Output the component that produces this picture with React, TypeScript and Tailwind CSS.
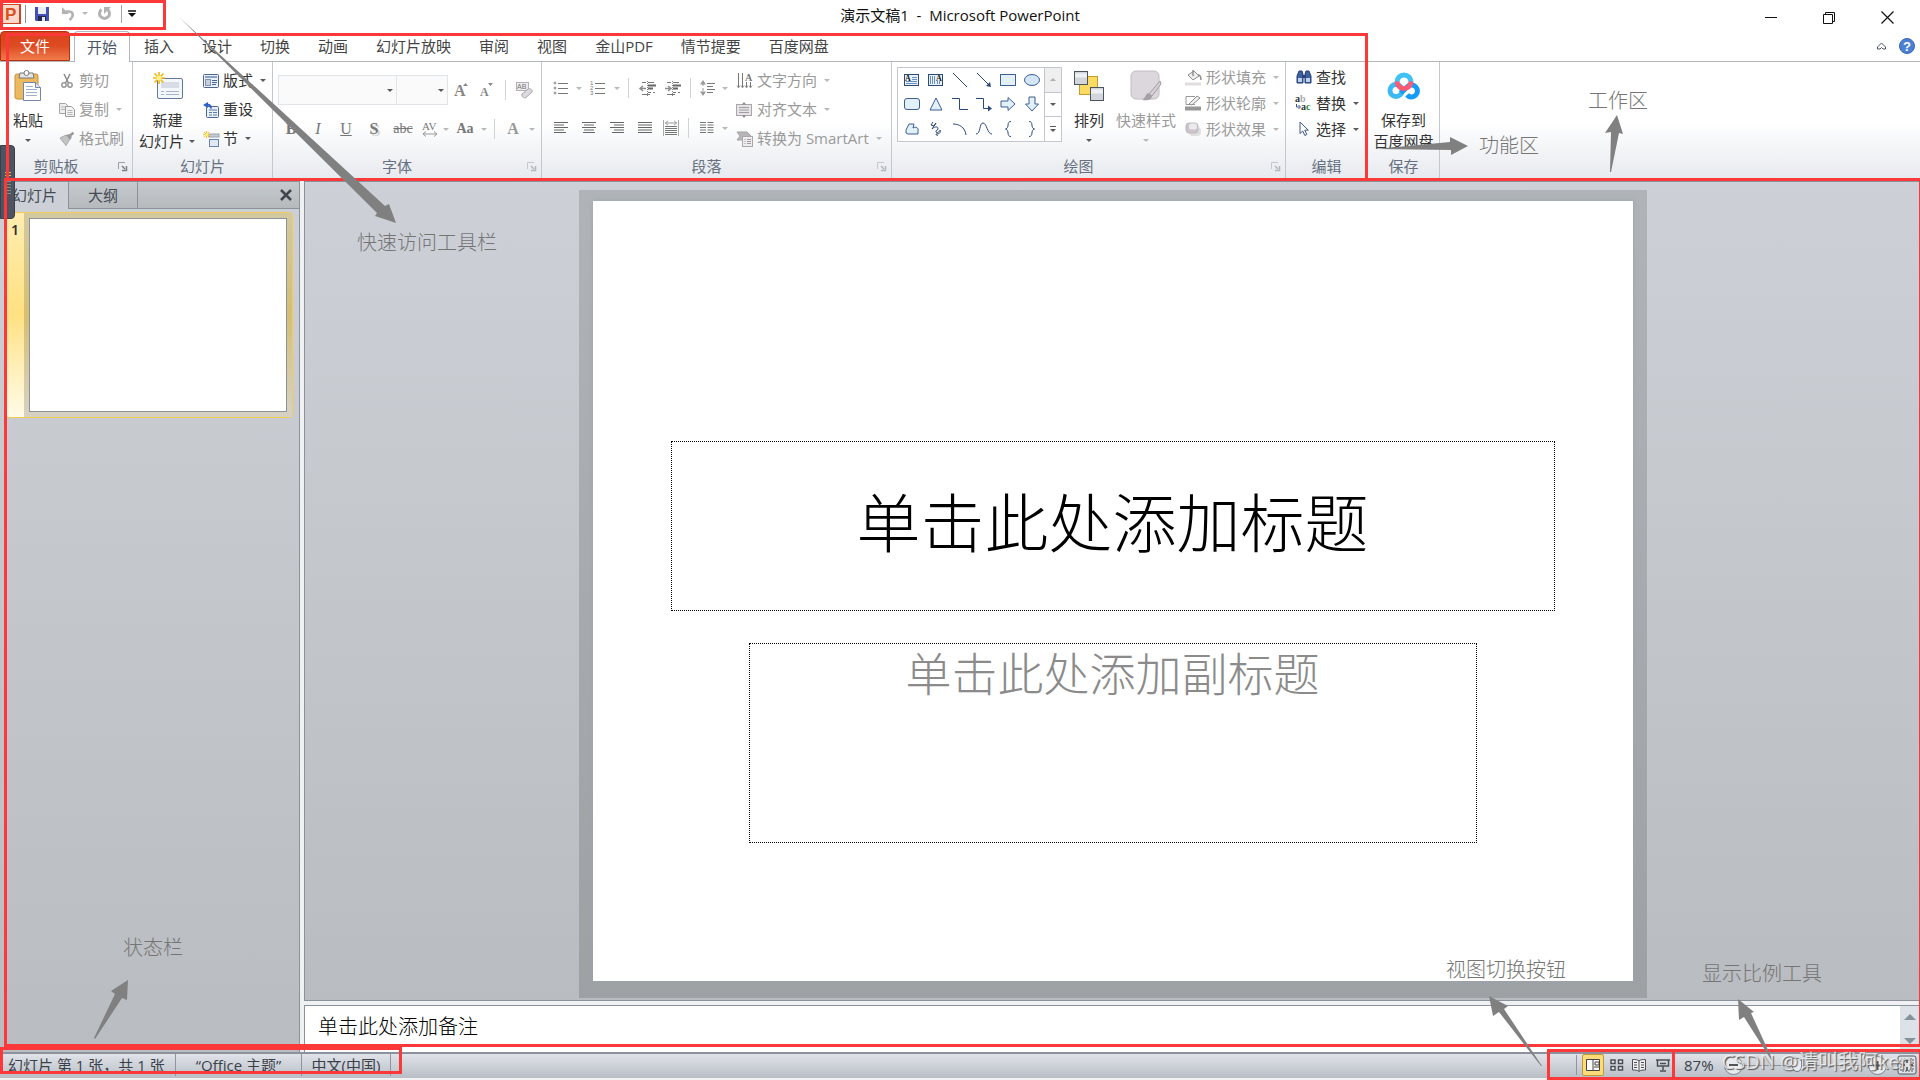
import type { ReactNode } from "react";
import clsx from "clsx";

const tabs = ["开始", "插入", "设计", "切换", "动画", "幻灯片放映", "审阅", "视图", "金山PDF", "情节提要", "百度网盘"];

/* ---------- small shared parts ---------- */

function Svg({ w, h, children, className }: { w: number; h: number; children: ReactNode; className?: string }) {
  return (
    <svg width={w} height={h} viewBox={`0 0 ${w} ${h}`} fill="none" className={clsx("shrink-0 overflow-visible", className)} aria-hidden="true">
      {children}
    </svg>
  );
}

function Caret({ dim, className }: { dim?: boolean; className?: string }) {
  return (
    <span className={clsx("flex w-2 shrink-0 justify-center", className)}>
      <Svg w={6} h={3}>
        <path d="M0 0h6L3 3z" fill={dim ? "#b9b9b9" : "#5a5a5a"} />
      </Svg>
    </span>
  );
}

function Sep({ className }: { className: string }) {
  return (
    <span className={clsx("flex shrink-0 justify-center", className)}>
      <span className="h-5 w-px bg-[#cfd3da]" />
    </span>
  );
}

function Launcher({ dim }: { dim?: boolean }) {
  return (
    <button aria-label="对话框启动器" className="flex w-5 shrink-0 items-center justify-end pr-[5px]">
      <Svg w={9} h={9}>
        <path d="M.5 7V.5H7" stroke={dim ? "#c4c8cd" : "#9b9fa5"} />
        <path d="M4 4l3 3M8.500 4v4.500H4" stroke={dim ? "#b4b8bd" : "#7d8187"} strokeWidth="1.500" />
      </Svg>
    </button>
  );
}

function Group({ label, className, launcher, dimLauncher, children }: { label: string; className: string; launcher?: boolean; dimLauncher?: boolean; children: ReactNode }) {
  return (
    <section className={clsx("flex shrink-0 flex-col border-r border-[#c3c7ce]", className)}>
      <div className="flex h-[92px]">{children}</div>
      <div className="flex h-6 items-center">
        <span className="flex-1 text-center text-[15px] leading-6 text-[#667080]">{label}</span>
        {launcher && <Launcher dim={dimLauncher} />}
      </div>
    </section>
  );
}

function Row({ icon, text, dim, caret, compact }: { icon: ReactNode; text: string; dim?: boolean; caret?: boolean; compact?: boolean }) {
  return (
    <button className={clsx("flex items-center gap-1 whitespace-nowrap text-[15px]", compact ? "h-[26px]" : "h-[29px]", dim ? "text-[#9a9a9a]" : "text-[#333]")}>
      <span className="flex w-[17px] justify-center">{icon}</span>
      <span>{text}</span>
      {caret && <Caret dim={dim} className="ml-0.5" />}
    </button>
  );
}

function Big({ icon, lines, dim, caret, className }: { icon: ReactNode; lines: string[]; dim?: boolean; caret?: "below" | "inline"; className: string }) {
  return (
    <button className={clsx("flex shrink-0 flex-col items-center pt-1.5 text-[15px] leading-[21px]", dim ? "text-[#9a9a9a]" : "text-[#333]", className)}>
      <span className="flex h-9 items-center">{icon}</span>
      <span className="mt-1.5">{lines[0]}</span>
      {lines[1] && (
        <span className="flex items-center gap-1 whitespace-nowrap">
          {lines[1]}
          {caret === "inline" && <Caret />}
        </span>
      )}
      {caret === "below" && <Caret dim={dim} className="mt-2" />}
    </button>
  );
}

/* ---------- ribbon icons ---------- */

const lines = (list: [number, number][], color = "#666") => list.map(([x, w], i) => <path key={i} d={`M${x} ${i * 2.5 + 0.5}h${w}`} stroke={color} />);

const AlignIcon = ({ kind }: { kind: "l" | "c" | "r" | "j" }) => (
  <Svg w={14} h={12}>
    {lines(
      {
        l: [[0, 14], [0, 10], [0, 14], [0, 10], [0, 12]],
        c: [[0, 14], [2, 10], [0, 14], [2, 10], [1, 12]],
        r: [[0, 14], [4, 10], [0, 14], [4, 10], [2, 12]],
        j: [[0, 14], [0, 14], [0, 14], [0, 14], [0, 14]],
      }[kind] as [number, number][]
    )}
  </Svg>
);

const PasteIcon = () => (
  <Svg w={28} h={32}>
    <rect x="1" y="4" width="23" height="25" rx="2" fill="#edb95e" stroke="#c98f3a" />
    <path d="M6 3h13l1 5H5z" fill="#e3e5e8" stroke="#777" />
    <circle cx="12.500" cy="3" r="2.500" fill="#fff" stroke="#777" />
    <path d="M9.500 12.500h12l5 5v13h-17z" fill="#fff" stroke="#6f86ad" />
    <path d="M21.500 12.500v5h5" fill="#dce6f4" stroke="#6f86ad" />
    <path d="M12 16.500h7M12 19.500h11M12 22.500h11M12 25.500h11" stroke="#9db0cf" />
  </Svg>
);

const CutIcon = () => (
  <Svg w={12} h={16}>
    <path d="M3 1l4.500 9M9 1L4.500 10" stroke="#8b8b8b" strokeWidth="1.500" />
    <circle cx="3" cy="12" r="2.200" stroke="#999" strokeWidth="1.500" />
    <circle cx="9" cy="12" r="2.200" stroke="#999" strokeWidth="1.500" />
  </Svg>
);

const CopyIcon = () => (
  <Svg w={16} h={14}>
    <path d="M.5.5h6l3 3v7h-9z" fill="#eee" stroke="#a5a5a5" />
    <path d="M6.500 3.500h6l3 3v7h-9z" fill="#f3f3f3" stroke="#9c9c9c" />
    <path d="M2 4h4M2 6.500h4M8.500 7.500h5M8.500 9.500h5M8.500 11.500h5" stroke="#b5b5b5" />
  </Svg>
);

const BrushIcon = () => (
  <Svg w={16} h={14}>
    <path d="M1 6l6-3 4 4-4 6.500z" fill="#c4c4c4" stroke="#aaa" />
    <path d="M7 3l3-1 3 3-2 3z" fill="#9c9c9c" />
    <path d="M11 3.500L14.500.8" stroke="#999" strokeWidth="2.500" />
  </Svg>
);

const Sun = () => (
  <>
    <path d="M6 0v12M0 6h12M1.500 1.500l9 9M10.500 1.500l-9 9" stroke="#f2b70c" strokeWidth="1.600" />
    <circle cx="6" cy="6" r="2.500" fill="#fff38a" />
  </>
);

const NewSlideIcon = () => (
  <Svg w={30} h={28}>
    <rect x="4.500" y="6.500" width="25" height="20" rx="1.500" fill="#f4f7fb" stroke="#6479a0" />
    <rect x="8" y="10" width="18" height="6" fill="#d7dce6" />
    <path d="M8 19.500h3M13 19.500h13M8 22.500h3M13 22.500h13" stroke="#a9b4c8" />
    <Sun />
  </Svg>
);

const LayoutIcon = () => (
  <Svg w={16} h={14}>
    <rect x=".5" y=".5" width="15" height="13" rx="1" fill="#eaf0f8" stroke="#4c668f" />
    <path d="M2 3h12" stroke="#6b87b3" strokeWidth="1.500" />
    <rect x="2.500" y="5.500" width="5" height="6" fill="#c5cfdd" stroke="#8594ab" />
    <path d="M9 6.500h5M9 8.500h5M9 10.500h4" stroke="#47638f" />
  </Svg>
);

const ResetIcon = () => (
  <Svg w={16} h={16}>
    <rect x="3.500" y="4.500" width="12" height="11" rx="1" fill="#eaf0f8" stroke="#4c668f" />
    <path d="M6 8h8M6 10.500h3M10 10.500h4M6 13h3M10 13h4" stroke="#5d78a5" />
    <path d="M8 6.500C8 3 6 2.500 4 3" stroke="#2c62c4" strokeWidth="2" />
    <path d="M5 0v6L0 3z" fill="#2c62c4" />
  </Svg>
);

const SectionIcon = () => (
  <Svg w={16} h={16}>
    <rect x="6" y="3" width="10" height="3" fill="#c6ccd6" stroke="#99a3b3" />
    <rect x="6.500" y="8.500" width="9" height="7" fill="#dfe8f4" stroke="#6a84b0" />
    <g transform="scale(.6)">
      <Sun />
    </g>
  </Svg>
);

const EraserIcon = () => (
  <Svg w={17} h={17}>
    <rect x=".5" y=".5" width="12" height="8" fill="#eceaed" stroke="#b3b0b6" />
    <text x="1" y="7" fontSize="7" fill="#777" fontFamily="Liberation Sans">AB</text>
    <path d="M6 12l6-5c2-1 5 1 4 3l-6 5.500c-2 1-5-1-4-3.500z" fill="#dddadf" stroke="#a7a3ab" />
  </Svg>
);

const ListIcon = ({ numbered }: { numbered?: boolean }) => (
  <Svg w={16} h={14}>
    {numbered ? (
      <g fontSize="6" fill="#777" fontFamily="Liberation Sans">
        <text x="0" y="4">1</text>
        <text x="0" y="9">2</text>
        <text x="0" y="14">3</text>
      </g>
    ) : (
      <g stroke="#888">
        <circle cx="2" cy="2" r="1" />
        <circle cx="2" cy="7" r="1" />
        <circle cx="2" cy="12" r="1" />
      </g>
    )}
    <path d="M5 2.500h10M5 7.500h10M5 12.500h10" stroke="#777" />
  </Svg>
);

const IndentIcon = ({ inc }: { inc?: boolean }) => (
  <Svg w={16} h={15}>
    <path d="M2 1.500h4M2 13.500h8M8 1.500h6M8 4.500h8M8 11.500h3M13 11.500h2" stroke="#777" />
    <path d="M8 4.500h8M8 7.500h5" stroke="#666" strokeWidth="2" />
    <path d="M7.500 0v15" stroke="#888" strokeDasharray="1 1" />
    <path d={inc ? "M0 7.500h5M3 5l3 2.500L3 10" : "M6 7.500H1M3 5L0 7.500 3 10"} stroke="#8d8d8d" strokeWidth="1.500" />
  </Svg>
);

const SpacingIcon = () => (
  <Svg w={16} h={16}>
    <path d="M3 3v10" stroke="#999" strokeDasharray="3 2" />
    <path d="M0 4.500L3 0l3 4.500zM0 11.500L3 16l3-4.500z" fill="#999" />
    <path d="M7 3.500h8M7 6.500h6M7 9.500h8M7 12.500h6" stroke="#777" />
  </Svg>
);

const DistributeIcon = () => (
  <Svg w={16} h={16}>
    <path d="M.5 0v16M15.500 0v16" stroke="#aaa" />
    <path d="M2 3h12M5 .8L2.500 3 5 5.200M11 .8L13.500 3 11 5.200" stroke="#999" />
    <path d="M2 6.500h12M2 8.500h12M2 10.500h12M2 12.500h12M2 14.500h12" stroke="#777" />
  </Svg>
);

const ColumnsIcon = () => (
  <Svg w={14} h={12}>
    <path d="M0 .5h6M0 3h6M0 5.500h6M0 8h6M0 10.500h6M7.500.5h6M7.500 3h6M7.500 5.500h6M7.500 8h6M7.500 10.500h6" stroke="#777" />
  </Svg>
);

const DirectionIcon = () => (
  <Svg w={16} h={16}>
    <path d="M1.500 0v14M5.500 0v14M9.500 9v5M13.500 9v5" stroke="#777" />
    <path d="M0 12.500l1.500 2.500L3 12.500M4 12.500l1.500 2.500L7 12.500M8 12.500l1.500 2.500 1.500-2.500M12 12.500l1.500 2.500 1.500-2.500" stroke="#777" strokeWidth=".7" />
    <text x="8" y="8" fontSize="10" fontWeight="bold" fill="#777" fontFamily="Liberation Serif">A</text>
  </Svg>
);

const AlignTextIcon = () => (
  <Svg w={17} h={16}>
    <rect x=".5" y="2.500" width="15" height="11" fill="#e7e4e7" stroke="#aaa6aa" />
    <path d="M3 5.500h10M3 8h10M3 10.500h10" stroke="#9f9b9f" />
    <path d="M6 2.500L8 0l2 2.500zM6 13.500L8 16l2-2.500z" fill="#888" />
  </Svg>
);

const SmartArtIcon = () => (
  <Svg w={16} h={16}>
    <path d="M0 1h10l4 4-4 4H0l3-4z" fill="#b9b6b9" stroke="#a5a2a5" />
    <rect x="5.500" y="5.500" width="10" height="10" fill="#efedef" stroke="#aaa6aa" />
    <path d="M7.500 8.500h1M10 8.500h4M7.500 10.500h1M10 10.500h4M7.500 12.500h1M10 12.500h4" stroke="#9f9b9f" />
  </Svg>
);

const ArrangeIcon = () => (
  <Svg w={31} h={31}>
    <rect x="5.500" y="5.500" width="18" height="18" fill="#fbdb62" stroke="#c79c2d" />
    <rect x=".5" y=".5" width="13" height="13" fill="#d3d7dc" stroke="#4d545d" />
    <rect x="16.500" y="16.500" width="13" height="13" fill="#d3d7dc" stroke="#4d545d" />
    <path d="M1 4.500h12M17 20.500h12" stroke="#eef0f2" strokeWidth="4" />
  </Svg>
);

const QuickStyleIcon = () => (
  <Svg w={32} h={32}>
    <rect x="1" y="1" width="28" height="28" rx="5" fill="#dcd7dc" stroke="#c1bcc1" />
    <path d="M30 11L19 24l3 2 9-12z" fill="#d5d1d5" stroke="#a09ca0" />
    <path d="M18 23l4 3c0 4-5 5-10 4 3-1 3-5 6-7z" fill="#a5a1a5" />
  </Svg>
);

const FillIcon = () => (
  <Svg w={17} h={17}>
    <path d="M3 6l6-4 5 5-6 4z" fill="#eee" stroke="#8f8f8f" />
    <path d="M8 7V1M13 6c2 0 3 2 3 5" stroke="#8f8f8f" strokeWidth="1.500" />
    <path d="M0 15h16" stroke="#e2dde0" strokeWidth="3" />
  </Svg>
);

const OutlineIcon = () => (
  <Svg w={17} h={16}>
    <path d="M10 1.500H1v8h9" stroke="#999" />
    <path d="M4 9l8-8 3 2-8 7z" fill="#eee" stroke="#8f8f8f" />
    <path d="M0 13.500h16" stroke="#979797" strokeWidth="4" />
  </Svg>
);

const EffectIcon = () => (
  <Svg w={17} h={15}>
    <rect x="4" y="5" width="12" height="9" rx="4" fill="#e0dfe0" />
    <rect x="1" y="1" width="12" height="10" rx="3" fill="#cbc5cb" stroke="#bdb8bd" />
    <rect x="4" y="1.500" width="8" height="6" rx="2" fill="#ece9ec" />
  </Svg>
);

const FindIcon = () => (
  <Svg w={16} h={14}>
    <path d="M3 1h3l1 3v9H1V6zM10 1h3l2 5v7H9V4z" fill="#3d5f9d" stroke="#274377" />
    <path d="M6 5h4v3H6z" fill="#274377" />
    <path d="M2 8h4v4H2zM10 8h4v4h-4z" fill="#bfd0ee" />
  </Svg>
);

const ReplaceIcon = () => (
  <Svg w={17} h={16}>
    <g fontFamily="Liberation Serif" fontWeight="bold" fontSize="10">
      <text x="0" y="7" fill="#333">a</text>
      <text x="5" y="7" fill="#aaa">b</text>
      <text x="6" y="15" fill="#333">a</text>
      <text x="11" y="15" fill="#1e8a33">c</text>
    </g>
    <path d="M1.500 9v3h3M3.500 10l2 2-2 2" stroke="#33518a" />
  </Svg>
);

const SelectIcon = () => (
  <Svg w={10} h={16}>
    <path d="M1 1v11.500l2.800-2.500 2 4.500 2-1-2-4.300h3.500z" fill="#fff" stroke="#3d5889" />
  </Svg>
);

const BaiduIcon = () => (
  <Svg w={34} h={28}>
    <g strokeWidth="5">
      <circle cx="9" cy="18.500" r="6" stroke="#3ab9f3" />
      <path d="M10 10a7 7 0 0 1 14 0" stroke="#3fc2f5" />
      <path d="M14 21l6-6a6 6 0 1 1 0 8" stroke="#169cf6" />
      <path d="M10 9.500a7 7 0 0 0 14 0" stroke="#fb5a77" />
    </g>
  </Svg>
);

/* ---------- shape gallery ---------- */

const shapes: { name: string; art: ReactNode }[] = [
  { name: "文本框", art: <><rect x=".5" y="2.500" width="14" height="11" fill="#e7f1fa" stroke="#2e4a72" /><path d="M8 5.500h5M8 7.500h5M2 9.500h11M2 11.500h11" stroke="#6d8fbe" /><text x="1" y="9" fontSize="8" fontWeight="bold" fill="#111" fontFamily="Liberation Serif">A</text></> },
  { name: "竖排文本框", art: <><rect x=".5" y="2.500" width="14" height="11" fill="#e7f1fa" stroke="#2e4a72" /><path d="M2.500 4v8M4.500 4v8M6.500 4v8M9.500 9v3M11.500 9v3" stroke="#6d8fbe" /><text x="8" y="9" fontSize="8" fontWeight="bold" fill="#111" fontFamily="Liberation Serif">A</text></> },
  { name: "直线", art: <path d="M1 1l14 14" stroke="#2c4878" /> },
  { name: "箭头", art: <><path d="M1 1l12 12" stroke="#2c4878" /><path d="M15 15l-5-1 4-4z" fill="#2c4878" /></> },
  { name: "矩形", art: <rect x=".5" y="2.500" width="15" height="11" fill="#e2f0fa" stroke="#3d5f92" /> },
  { name: "椭圆", art: <ellipse cx="8" cy="8" rx="7.500" ry="5.500" fill="#d4e6f5" stroke="#3d5f92" /> },
  { name: "圆角矩形", art: <rect x=".5" y="2.500" width="15" height="11" rx="2.500" fill="#e2f0fa" stroke="#3d5f92" /> },
  { name: "三角形", art: <path d="M8 2l6 12H2z" fill="#e2f0fa" stroke="#3d5f92" /> },
  { name: "肘形连接符", art: <path d="M0 2.500h7.500v11H16" stroke="#2c4878" /> },
  { name: "肘形箭头", art: <><path d="M0 2.500h7.500v10H13" stroke="#2c4878" /><path d="M12 9.500l4 3-4 3z" fill="#2c4878" /></> },
  { name: "右箭头", art: <path d="M1 5h7V1.500L15 8l-7 6.500V11H1z" fill="#e2f0fa" stroke="#3d5f92" /> },
  { name: "下箭头", art: <path d="M5 1v7H1.500L8 15l6.500-7H11V1z" fill="#e2f0fa" stroke="#3d5f92" /> },
  { name: "任意多边形", art: <path d="M2 9l3-6h5l-1 4c3-2 6 0 5 3v3H4l-2-1z" fill="#e2f0fa" stroke="#3d5f92" /> },
  { name: "自由曲线", art: <path d="M5 1L3 4l3 1 2-3-4 6c2-2 5-3 6-1s-3 2-2 4 4-1 4-2c1 3-1 4-4 4 0 1 1 2 2 1" stroke="#2c4878" /> },
  { name: "弧形", art: <path d="M1 3c6 0 12 3 13 11" stroke="#2c4878" /> },
  { name: "曲线", art: <path d="M0 13C5 13 3 2 7 2s4 11 9 11" stroke="#2c4878" /> },
  { name: "左大括号", art: <path d="M11 .5C6 .5 10 7 5.500 8c4.500 1 .5 7.500 5.500 7.500" stroke="#2c4878" /> },
  { name: "右大括号", art: <path d="M5 .5c5 0 1 6.500 5.500 7.500C6 9 10 15.500 5 15.500" stroke="#2c4878" /> },
];

function ShapeGallery() {
  return (
    <div className="mt-[5px] ml-[5px] flex h-[75px] shrink-0 border border-[#c3c7cd] bg-white">
      <div className="grid grid-cols-6 pl-0.5">
        {shapes.map((s) => (
          <button key={s.name} aria-label={s.name} className="flex w-6 items-center justify-center">
            <Svg w={16} h={16}>{s.art}</Svg>
          </button>
        ))}
      </div>
      <div className="flex w-[17px] flex-col border-l border-[#c3c7cd]">
        <button aria-label="上一行" className="flex flex-1 items-center justify-center bg-[#efefef]">
          <Svg w={6} h={3}><path d="M0 3h6L3 0z" fill="#b0b0b0" /></Svg>
        </button>
        <button aria-label="下一行" className="flex flex-1 items-center justify-center border-y border-[#c3c7cd]">
          <Caret />
        </button>
        <button aria-label="其他" className="flex flex-1 items-center justify-center">
          <Svg w={6} h={6}><path d="M0 3h6L3 6z" fill="#5a5a5a" /><path d="M0 .5h6" stroke="#5a5a5a" /></Svg>
        </button>
      </div>
    </div>
  );
}

/* ---------- title bar and tabs ---------- */

function TitleBar() {
  return (
    <header className="grid h-[31px] grid-cols-[1fr_auto_1fr] items-center">
      <div className="flex h-full items-center pb-1 pl-0.5">
        <Svg w={19} h={20}>
          <rect x=".5" y=".5" width="18" height="19" fill="#fbd9cb" stroke="#d1441f" />
          <path d="M18 1v18" stroke="#d1441f" strokeWidth="2" />
          <text x="3" y="16" fontSize="17" fontWeight="bold" fill="#d9501e" fontFamily="Liberation Sans">P</text>
        </Svg>
        <span className="ml-1 h-[18px] w-px bg-[#8e8e8e]" />
        <button aria-label="保存" className="ml-[9px]">
          <Svg w={14} h={14}>
            <path d="M0 0h14v14H1l-1-1z" fill="#4450b8" />
            <path d="M3 0h8v7H3z" fill="#e8edf8" />
            <path d="M3 9h8v5H3z" fill="#23284f" />
            <path d="M7 10h3v4H7z" fill="#e4e7f2" />
          </Svg>
        </button>
        <button aria-label="撤消" className="ml-[13px]">
          <Svg w={13} h={14}>
            <path d="M4 4.500h2.500c5.500 0 5.500 5 1 8.500" stroke="#b3b3b3" strokeWidth="2.500" />
            <path d="M0 0v7h7z" fill="#b3b3b3" />
          </Svg>
        </button>
        <Caret dim className="ml-1.5" />
        <button aria-label="恢复" className="ml-[9px]">
          <Svg w={13} h={14}>
            <path d="M3.500 2.500a5 5 0 1 0 6 0" stroke="#b3b3b3" strokeWidth="3" />
            <path d="M6 0h7L6 7z" fill="#b3b3b3" />
          </Svg>
        </button>
        <span className="ml-2.5 h-[18px] w-px bg-[#a5a5a5]" />
        <button aria-label="自定义快速访问工具栏" className="ml-1.5">
          <Svg w={8} h={7}>
            <path d="M0 1h8" stroke="#111" strokeWidth="1.500" />
            <path d="M0 3h8L4 7z" fill="#111" />
          </Svg>
        </button>
      </div>
      <h1 className="text-[15px] text-[#111]">演示文稿1&nbsp; - &nbsp;Microsoft PowerPoint</h1>
      <div className="flex items-center justify-end gap-[46px] pt-1 pr-[26px]">
        <button aria-label="最小化"><Svg w={12} h={12}><path d="M0 5.500h12" stroke="#111" /></Svg></button>
        <button aria-label="还原"><Svg w={12} h={12}><path d="M.5 2.500h9v9h-9zM2.500 2V.5h9v9H10" stroke="#111" /></Svg></button>
        <button aria-label="关闭"><Svg w={13} h={13}><path d="M.5.5l12 12M12.500.5l-12 12" stroke="#111" strokeWidth="1.200" /></Svg></button>
      </div>
    </header>
  );
}

function TabBar() {
  return (
    <nav className="flex h-[31px] border-b border-[#b3b6ba] text-[15px] leading-[29px] text-[#444]">
      <button className="w-[70px] rounded-t-sm border border-[#b5300d] bg-linear-to-b from-[#d9431b] via-[#de4a22] to-[#ef7a4a] text-white">文件</button>
      <span className="w-1" />
      {tabs.map((t, i) => (
        <button
          key={t}
          className={clsx("whitespace-nowrap", i === 0 ? "-mb-px h-[31px] rounded-t border border-b-0 border-[#b3b6ba] bg-white px-3 text-[#4c5566]" : "px-3.5")}
        >
          {t}
        </button>
      ))}
      <div className="flex flex-1 items-center justify-end gap-[13px] pr-[5px]">
        <button aria-label="功能区最小化">
          <Svg w={9} h={8}><path d="M.5 5L4.500 1l4 4v2H6L4.500 5.500 3 7H.5z" stroke="#4c5566" /></Svg>
        </button>
        <button aria-label="帮助">
          <Svg w={16} h={16}>
            <circle cx="8" cy="8" r="7.500" fill="#4c80d2" stroke="#3766b8" />
            <text x="4" y="13" fontSize="13" fontWeight="bold" fill="#fff" fontFamily="Liberation Sans">?</text>
          </Svg>
        </button>
      </div>
    </nav>
  );
}

/* ---------- ribbon ---------- */

const cell = "flex shrink-0 items-center justify-center";

function FontGroup() {
  return (
    <Group label="字体" className="w-[269px]" launcher dimLauncher>
      <div className="flex flex-col pl-[5px] pt-[13px] font-['Liberation_Serif','Noto_Sans_CJK_SC',serif] text-base text-[#777]">
        <div className="flex h-[30px] items-center">
          <div className="flex h-full w-[119px] items-center border border-[#e1e4e9] bg-[#fafafb] pr-0.5">
            <select aria-label="字体" className="h-full flex-1 appearance-none bg-transparent" />
            <Caret />
          </div>
          <div className="flex h-full w-[51px] items-center border border-l-0 border-[#e1e4e9] bg-[#fafafb] pr-0.5">
            <select aria-label="字号" className="h-full w-8 flex-1 appearance-none bg-transparent" />
            <Caret />
          </div>
          <button aria-label="增大字号" className={clsx(cell, "w-[26px]")}>
            <Svg w={14} h={15}><text x="0" y="13" fontSize="16" fontWeight="bold" fill="#888" fontFamily="Liberation Serif">A</text><path d="M9 3h5l-2.500-3z" fill="#888" /></Svg>
          </button>
          <button aria-label="减小字号" className={clsx(cell, "w-6")}>
            <Svg w={13} h={15}><text x="0" y="13" fontSize="12" fontWeight="bold" fill="#888" fontFamily="Liberation Serif">A</text><path d="M8 0h5l-2.500 3z" fill="#888" /></Svg>
          </button>
          <Sep className="w-3.5" />
          <button aria-label="清除格式" className={clsx(cell, "w-6")}><EraserIcon /></button>
        </div>
        <div className="mt-[11px] flex h-[26px] items-center">
          <button className={clsx(cell, "w-[26px] font-bold")}>B</button>
          <button className={clsx(cell, "w-7 italic")}>I</button>
          <button className={clsx(cell, "w-7 underline")}>U</button>
          <button className={clsx(cell, "w-7 font-bold text-shadow-[2px_2px_1px_#ccc]")}>S</button>
          <button className={clsx(cell, "w-[30px] text-sm line-through")}>abc</button>
          <button aria-label="字符间距" className={clsx(cell, "w-6")}>
            <Svg w={16} h={16}><text x="0" y="9" fontSize="11" fill="#777" fontFamily="Liberation Serif">AV</text><path d="M1 13h14M4 10.500L1 13l3 2.500M12 10.500l3 2.500-3 2.500" stroke="#999" /></Svg>
          </button>
          <Caret dim />
          <button className={clsx(cell, "w-[30px] text-sm font-bold")}>Aa</button>
          <Caret dim />
          <Sep className="w-3" />
          <button className={clsx(cell, "w-[26px] font-bold text-[#999]")}>A</button>
          <Caret dim className="ml-0.5" />
        </div>
      </div>
    </Group>
  );
}

function ParagraphGroup() {
  return (
    <Group label="段落" className="w-[350px]" launcher dimLauncher>
      <div className="flex w-[189px] shrink-0 flex-col pl-[5px] pt-[11px]">
        <div className="flex h-[30px] items-center">
          <button aria-label="项目符号" className={clsx(cell, "w-7")}><ListIcon /></button>
          <Caret dim />
          <button aria-label="编号" className={clsx(cell, "w-[30px]")}><ListIcon numbered /></button>
          <Caret dim />
          <Sep className="w-3.5" />
          <button aria-label="减少缩进" className={clsx(cell, "w-[26px]")}><IndentIcon /></button>
          <button aria-label="增加缩进" className={clsx(cell, "w-6")}><IndentIcon inc /></button>
          <Sep className="w-2.5" />
          <button aria-label="行距" className={clsx(cell, "w-[26px]")}><SpacingIcon /></button>
          <Caret dim />
        </div>
        <div className="mt-2.5 flex h-[30px] items-center">
          <button aria-label="左对齐" className={clsx(cell, "w-7")}><AlignIcon kind="l" /></button>
          <button aria-label="居中" className={clsx(cell, "w-7")}><AlignIcon kind="c" /></button>
          <button aria-label="右对齐" className={clsx(cell, "w-7")}><AlignIcon kind="r" /></button>
          <button aria-label="两端对齐" className={clsx(cell, "w-7")}><AlignIcon kind="j" /></button>
          <button aria-label="分散对齐" className={clsx(cell, "w-6")}><DistributeIcon /></button>
          <Sep className="w-2.5" />
          <button aria-label="分栏" className={clsx(cell, "w-7")}><ColumnsIcon /></button>
          <Caret dim />
        </div>
      </div>
      <div className="flex flex-col items-start pt-1 pl-[5px]">
        <Row icon={<DirectionIcon />} text="文字方向" dim caret />
        <Row icon={<AlignTextIcon />} text="对齐文本" dim caret />
        <Row icon={<SmartArtIcon />} text="转换为 SmartArt" dim caret />
      </div>
    </Group>
  );
}

function Ribbon() {
  return (
    <div className="flex h-[119px] overflow-hidden bg-linear-to-b from-white from-50% to-[#e6e9ee]">
      <Group label="剪贴板" className="w-[133px]" launcher>
        <Big icon={<PasteIcon />} lines={["粘贴"]} caret="below" className="w-14" />
        <div className="flex flex-col items-start pt-1 pl-0.5">
          <Row icon={<CutIcon />} text="剪切" dim />
          <Row icon={<CopyIcon />} text="复制" dim caret />
          <Row icon={<BrushIcon />} text="格式刷" dim />
        </div>
      </Group>
      <Group label="幻灯片" className="w-[140px]">
        <Big icon={<NewSlideIcon />} lines={["新建", "幻灯片"]} caret="inline" className="w-[69px]" />
        <div className="flex flex-col items-start pt-1">
          <Row icon={<LayoutIcon />} text="版式" caret />
          <Row icon={<ResetIcon />} text="重设" />
          <Row icon={<SectionIcon />} text="节" caret />
        </div>
      </Group>
      <FontGroup />
      <ParagraphGroup />
      <Group label="绘图" className="w-[394px]" launcher dimLauncher>
        <ShapeGallery />
        <Big icon={<ArrangeIcon />} lines={["排列"]} caret="below" className="w-[54px]" />
        <Big icon={<QuickStyleIcon />} lines={["快速样式"]} dim caret="below" className="w-[60px]" />
        <div className="flex flex-col items-start pt-0.5 pl-[9px]">
          <Row compact icon={<FillIcon />} text="形状填充" dim caret />
          <Row compact icon={<OutlineIcon />} text="形状轮廓" dim caret />
          <Row compact icon={<EffectIcon />} text="形状效果" dim caret />
        </div>
      </Group>
      <Group label="编辑" className="w-[82px]">
        <div className="flex flex-col items-start pt-0.5 pl-[9px]">
          <Row compact icon={<FindIcon />} text="查找" />
          <Row compact icon={<ReplaceIcon />} text="替换" caret />
          <Row compact icon={<SelectIcon />} text="选择" caret />
        </div>
      </Group>
      <Group label="保存" className="w-[72px]">
        <Big icon={<BaiduIcon />} lines={["保存到", "百度网盘"]} className="w-full" />
      </Group>
    </div>
  );
}

/* ---------- work area ---------- */

function SlidePanel() {
  return (
    <aside className="flex w-[300px] shrink-0 flex-col border-r border-[#8c929b] bg-linear-to-b from-[#cdd1d7] to-[#b9bcc0]">
      <div className="flex h-7 items-stretch border-t border-[#8c929b] text-[15px] text-[#444b55]">
        <button className="w-[69px] border-r border-[#8c929b] pl-3 text-left">幻灯片</button>
        <button className="w-[69px] border-r border-b border-[#8c929b] bg-linear-to-b from-[#c5cace] to-[#b6babd]">大纲</button>
        <div className="flex flex-1 items-center justify-end border-b border-[#8c929b] bg-linear-to-b from-[#c5cace] to-[#b6babd] pr-[7px]">
          <button aria-label="关闭">
            <Svg w={12} h={12}><path d="M1 1l10 10M11 1L1 11" stroke="#41464c" strokeWidth="2.500" /></Svg>
          </button>
        </div>
      </div>
      <div className="mt-[3px] mr-1.5 ml-[5px] flex rounded-sm border border-[#f3cb55] bg-linear-to-b from-[#ffedb0] via-[#ffe182] to-[#fffbe6]">
        <span className="w-[18px] pt-[7px] text-center font-['Noto_Sans',sans-serif] text-sm font-semibold text-[#333]">1</span>
        <div className="flex-1 bg-linear-to-b from-[#d3c9a0] via-[#d6bf72] to-[#d6d2c4] p-[5px]">
          <div className="aspect-[4/3] border border-[#8c929b] bg-white" />
        </div>
      </div>
    </aside>
  );
}

function Stage() {
  return (
    <div className="flex min-h-0 flex-1 justify-center border border-r-0 border-[#8c929b] bg-linear-to-b from-[#cdd1d7] to-[#b9bcc0] pt-2 pb-0.5">
      <div className="bg-linear-to-b from-[#b0b4b8] to-[#9da1a4] px-[14px] pt-[11px] pb-[17px]">
        <div className="flex aspect-[4/3] h-full flex-col items-center bg-white font-['Liberation_Serif','Noto_Sans_CJK_SC',serif] font-light shadow-[0_0_5px_#9aa3ae]">
          <div className="grow-[241] basis-0" />
          <div className="flex w-[85%] grow-[169] basis-0 items-center justify-center border border-dotted border-black text-[64px] leading-none text-black">
            <span>单击此处添加标题</span>
          </div>
          <div className="grow-[32] basis-0" />
          <div className="flex w-[70%] grow-[199] basis-0 justify-center border border-dotted border-black text-[46px] leading-[64px] text-[#8b8b8b]">
            <span className="h-0">单击此处添加副标题</span>
          </div>
          <div className="grow-[139] basis-0" />
        </div>
      </div>
    </div>
  );
}

function Notes() {
  return (
    <div className="mt-1 flex h-[47px] border-t border-l border-[#8c929b] bg-white">
      <input
        aria-label="备注"
        defaultValue="单击此处添加备注"
        className="min-w-0 flex-1 px-[13px] pb-1 font-['Liberation_Serif','Noto_Sans_CJK_SC',serif] text-xl font-light text-black outline-none"
      />
      <div className="flex w-5 flex-col items-center justify-between bg-[#dde1e8] pt-2 pb-2">
        <Svg w={12} h={6}><path d="M0 6h12L6 0z" fill="#84939a" /></Svg>
        <Svg w={12} h={6}><path d="M0 0h12L6 6z" fill="#84939a" /></Svg>
      </div>
    </div>
  );
}

function StatusBar() {
  return (
    <footer className="flex h-[26px] items-center border-t-2 border-[#8b929e] bg-linear-to-b from-[#e0e4e9] to-[#b9bec6] pb-0.5 text-[15px] leading-[22px] text-[#3b4149]">
      <span className="w-[176px] whitespace-nowrap border-r border-[#8f959e] pl-2">幻灯片 第 1 张，共 1 张</span>
      <span className="w-[126px] border-r border-[#8f959e] text-center">“Office 主题”</span>
      <button className="w-[89px] border-r border-[#8f959e] text-center">中文(中国)</button>
      <div className="flex flex-1 items-center justify-end">
        <span className="mr-[5px] h-5 w-px bg-[#8f959e]" />
        <button aria-label="普通视图" className="flex h-[22px] w-[22px] items-center justify-center rounded-xs border border-[#c29a35] bg-[#fcdc79]">
          <Svg w={14} h={12}><path d="M.5.5h13v11H.5z" fill="#fff" stroke="#444" /><path d="M7 1v10" stroke="#444" /><path d="M8 8h5M9 3h4v3H9z" stroke="#444" /></Svg>
        </button>
        <button aria-label="幻灯片浏览" className="ml-1.5">
          <Svg w={14} h={12}><path d="M1 1h4v3.500H1zM8.500 1h4v3.500h-4zM1 7.500h4V11H1zM8.500 7.500h4V11h-4z" fill="#eee" stroke="#4b4f55" strokeWidth="1.500" /></Svg>
        </button>
        <button aria-label="阅读视图" className="ml-2">
          <Svg w={14} h={13}><path d="M.5.5c3 0 5 0 6.500 1.500C8.500.5 11 .5 13.500.5V11c-2.500 0-5 0-6.500 1.500C5.500 11 3 11 .5 11zM7 2v10" fill="#eee" stroke="#4b4f55" /><path d="M2 3.500h3M2 6h3M2 8.500h3M9 3.500h3M9 6h3M9 8.500h3" stroke="#4b4f55" /></Svg>
        </button>
        <button aria-label="幻灯片放映" className="ml-2.5">
          <Svg w={14} h={13}><path d="M0 1h14M1.500 1v6h11V1M4 4.500h6M7 7v4M4 12h6" stroke="#4b4f55" strokeWidth="1.500" /></Svg>
        </button>
        <button className="ml-3.5 w-[34px] text-left">87%</button>
        <button aria-label="缩小" className="ml-1.5 flex size-[19px] items-center justify-center rounded-full border border-[#7f868f] bg-[#e8ebee]">
          <Svg w={9} h={2}><path d="M0 1h9" stroke="#555" strokeWidth="2" /></Svg>
        </button>
        <input
          type="range"
          aria-label="显示比例"
          min={0}
          max={100}
          defaultValue={43}
          className="h-4 w-[125px] appearance-none bg-[linear-gradient(#8f959e,#8f959e)] bg-[length:100%_1px] bg-center bg-no-repeat [&::-webkit-slider-thumb]:h-3.5 [&::-webkit-slider-thumb]:w-2.5 [&::-webkit-slider-thumb]:appearance-none [&::-webkit-slider-thumb]:rounded-b-full [&::-webkit-slider-thumb]:border [&::-webkit-slider-thumb]:border-[#6b7280] [&::-webkit-slider-thumb]:bg-[#e8ebee]"
        />
        <button aria-label="放大" className="flex size-[19px] items-center justify-center rounded-full border border-[#7f868f] bg-[#e8ebee]">
          <Svg w={9} h={9}><path d="M0 4.500h9M4.500 0v9" stroke="#555" strokeWidth="2" /></Svg>
        </button>
        <button aria-label="适应窗口" className="mr-[3px] ml-2.5">
          <Svg w={20} h={20}><rect x="1" y="1" width="18" height="18" rx="2" fill="#dfe2e6" stroke="#555b63" /><path d="M4 4h12v12H4z" stroke="#555b63" strokeDasharray="2 1" /><path d="M10 4v4M10 12v4M4 10h4M12 10h4" stroke="#444" strokeWidth="1.500" /></Svg>
        </button>
      </div>
    </footer>
  );
}

/* ---------- callouts drawn over the window ---------- */

const frame = "absolute border-3 border-[#fc3838]";
const note = "absolute whitespace-nowrap text-xl leading-6 font-light text-[#757575]";

function Arrow({ box, points, className }: { box: string; points: string; className: string }) {
  return (
    <svg viewBox={box} className={clsx("absolute fill-[#808080]", className)} aria-hidden="true">
      <polygon points={points} />
    </svg>
  );
}

function Callouts() {
  return (
    <div className="pointer-events-none absolute inset-0 overflow-hidden">
      <div className="absolute top-[145px] left-0 flex h-[74px] w-[15px] flex-col items-center gap-0.5 rounded-r border border-[#3a3f4b] bg-[#4d5361] pt-[26px]">
        <span className="h-px w-1.5 bg-[#d9c63a]" />
        <span className="h-px w-1.5 bg-[#d9c63a]" />
        <span className="h-px w-1.5 bg-[#d9c63a]" />
        <span className="h-px w-1.5 bg-[#7f9277]" />
        <span className="h-px w-1.5 bg-[#7f9277]" />
        <span className="h-px w-1.5 bg-[#7f9277]" />
        <span className="h-px w-1.5 bg-[#7f9277]" />
        <span className="h-px w-1.5 bg-[#7f9277]" />
      </div>

      <div className={clsx(frame, "top-0 left-0 h-[30px] w-[166px]")} />
      <div className={clsx(frame, "top-[33px] left-1.5 h-[148px] w-[1362px]")} />
      <div className={clsx(frame, "top-[178px] right-0 bottom-[33px] left-1 border-r")} />
      <div className={clsx(frame, "bottom-1.5 left-0 h-[27px] w-[402px]")} />
      <div className={clsx(frame, "right-[245px] bottom-0 h-[31px] w-32")} />
      <div className={clsx(frame, "right-0 bottom-0 h-[31px] w-[248px] border-r")} />

      <Arrow box="170 10 240 220" points="179,17 385,206 389,204 396,223 375,216 377,213" className="top-2.5 left-[170px] h-[220px] w-60" />
      <span className={clsx(note, "top-[231px] left-[357px]")}>快速访问工具栏</span>

      <Arrow box="1370 130 100 30" points="1375,149 1450,142 1450,137 1468,146 1451,155 1451,150" className="top-[130px] left-[1370px] h-[30px] w-[100px]" />
      <span className={clsx(note, "top-[134px] left-[1479px]")}>功能区</span>

      <Arrow box="1600 110 30 70" points="1617,115 1623,134 1619,133 1611,172 1610,172 1611,132 1605,133" className="top-[110px] left-[1600px] h-[70px] w-[30px]" />
      <span className={clsx(note, "top-[89px] left-[1588px]")}>工作区</span>

      <Arrow box="90 970 50 70" points="128,980 127,1000 122,998 95,1039 94,1038 115,994 111,991" className="bottom-10 left-[90px] h-[70px] w-[50px]" />
      <span className={clsx(note, "bottom-[120px] left-[123px]")}>状态栏</span>

      <Arrow box="1480 990 70 80" points="1489,996 1508,1006 1504,1009 1542,1066 1541,1066 1499,1012 1493,1016" className="right-[370px] bottom-2.5 h-20 w-[70px]" />
      <span className={clsx(note, "right-[354px] bottom-[98px]")}>视图切换按钮</span>

      <Arrow box="1730 990 50 80" points="1738,999 1754,1012 1751,1013 1773,1061 1772,1061 1744,1017 1739,1020" className="right-[140px] bottom-2.5 h-20 w-[50px]" />
      <span className={clsx(note, "right-[98px] bottom-[94px]")}>显示比例工具</span>

      <span className="absolute right-2 bottom-1 whitespace-nowrap text-xl leading-7 text-white/70 text-shadow-[1px_1px_1px_#555]">CSDN @请叫我阿ken</span>
    </div>
  );
}

export default function App() {
  return (
    <div className="relative flex h-screen flex-col overflow-hidden bg-white font-['Open_Sans','Noto_Sans_CJK_SC',sans-serif]">
      <TitleBar />
      <TabBar />
      <Ribbon />
      <main className="flex min-h-0 flex-1 bg-[#f0f1f3]">
        <SlidePanel />
        <div className="flex min-w-0 flex-1 flex-col pl-1">
          <Stage />
          <Notes />
        </div>
      </main>
      <StatusBar />
      <div className="h-0.5 bg-[#f2f2f2]" />
      <Callouts />
    </div>
  );
}
